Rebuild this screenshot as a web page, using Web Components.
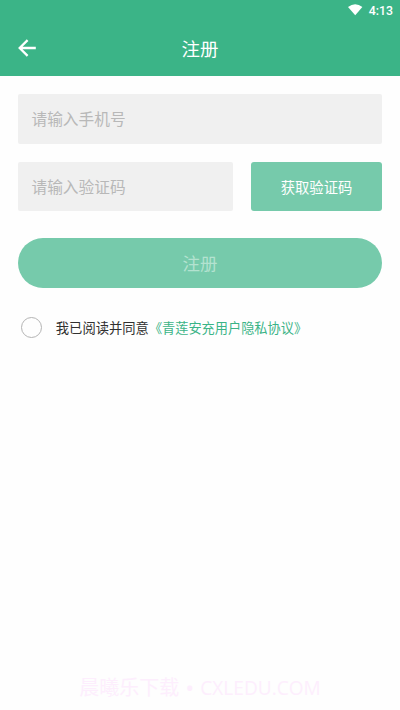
<!DOCTYPE html>
<html lang="zh-CN">
<head>
<meta charset="utf-8">
<title>注册</title>
<style>
html,body{margin:0;height:100%;background:#fefefe;font-family:"Roboto","Noto Sans CJK SC",sans-serif}
body{overflow:hidden}
</style>
</head>
<body>
<register-page></register-page>
<script>
const define = (name, html) => {
  const template = document.createElement('template');
  template.innerHTML = html;
  customElements.define(name, class extends HTMLElement {
    constructor() {
      super();
      this.attachShadow({ mode: 'open' }).append(template.content.cloneNode(true));
    }
  });
};

define('status-bar', `
<style>
:host{display:flex;height:22px;align-items:center;justify-content:flex-end;gap:5px;padding-right:7px;box-sizing:border-box;color:#fff;font-size:12.3px;font-weight:500;line-height:22px}
svg{display:block;margin-bottom:2px}
</style>
<svg width="16" height="12" viewBox="0 0 16 12"><path d="M0 3Q7.2-2.4 14.4 3L7.2 11.2Z" fill="#fff"/></svg>
<slot></slot>`);

define('title-bar', `
<style>
:host{display:grid;grid-template-columns:54px 1fr 54px;align-items:center;height:54px;color:#fff;font-size:18.5px;line-height:54px;text-align:center}
svg{display:block;margin:0 0 2px 18px}
span{padding-top:2px;line-height:52px}
</style>
<svg width="18" height="18" viewBox="0 0 18 18" fill="none" stroke="#fff" stroke-width="2.3"><path d="M9.6 1.1 1.7 9l7.9 7.9M1.7 9H17.8"/></svg>
<span><slot></slot></span>`);

define('text-field', `
<style>
:host{display:flex;align-items:center;box-sizing:border-box;height:var(--field-height,50px);padding:2px 13.5px 0;background:#f0f0f0;border-radius:2px;color:#b8b8b8;font-size:15.7px;line-height:48px}
</style><slot></slot>`);

define('code-button', `
<style>
:host{display:flex;align-items:center;justify-content:center;height:49px;background:#76caab;border-radius:3px;color:#fff;font-size:14.3px}
</style><slot></slot>`);

define('submit-button', `
<style>
:host{display:flex;align-items:center;justify-content:center;height:49.5px;box-sizing:border-box;padding-bottom:1px;background:#76caab;border-radius:25px;color:#b3e2d0;font-size:17.5px}
</style><slot></slot>`);

define('agreement-row', `
<style>
:host{display:flex;align-items:center;height:22px;padding-left:3px;color:#303030;font-size:13.3px;white-space:nowrap}
i{box-sizing:border-box;width:21px;height:21px;border:1px solid #b4b4b4;border-radius:50%;margin-right:13.8px}
::slotted(a){color:#3bb487;font-size:13.2px}
</style><i></i><slot></slot><slot name="link"></slot>`);

define('site-watermark', `
<style>
:host{display:flex;justify-content:center;align-items:center;gap:7px;color:#fdeefd;font:20px/28px "Open Sans","Noto Sans CJK SC",sans-serif;white-space:nowrap}
b{font-weight:400;width:7px;display:flex;justify-content:center;font-size:24px}
::slotted([slot=latin]){font-size:19.1px}
</style><slot></slot><b>•</b><slot name="latin"></slot>`);

define('register-page', `
<style>
:host{display:flex;flex-direction:column;height:710px;width:400px;box-sizing:border-box;padding-bottom:8px}
header{background:#3bb487}
main{display:flex;flex-direction:column;padding:18px 18px 0}
.code{--field-height:49px;display:grid;grid-template-columns:215px 131px;gap:18px;margin:18px 0 27px;align-items:center}
agreement-row{margin-top:28.5px}
site-watermark{margin-top:auto}
</style>
<header><status-bar>4:13</status-bar><title-bar>注册</title-bar></header>
<main>
<text-field>请输入手机号</text-field>
<div class="code"><text-field>请输入验证码</text-field><code-button>获取验证码</code-button></div>
<submit-button>注册</submit-button>
<agreement-row>我已阅读并同意<a slot="link">《青莲安充用户隐私协议》</a></agreement-row>
</main>
<site-watermark>晨曦乐下载<span slot="latin">CXLEDU.COM</span></site-watermark>`);
</script>
</body>
</html>
